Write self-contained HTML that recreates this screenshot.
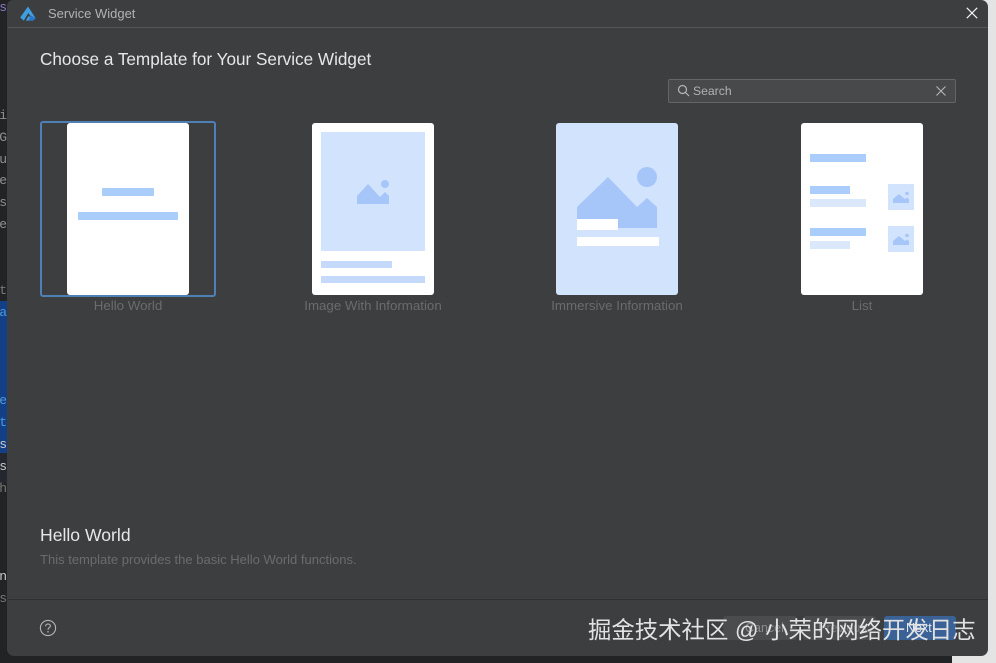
<!DOCTYPE html>
<html>
<head>
<meta charset="utf-8">
<style>
html,body{margin:0;padding:0}
body{width:996px;height:663px;position:relative;overflow:hidden;background:#222324;font-family:"Liberation Sans","Noto Sans CJK SC",sans-serif}
.a{position:absolute}
.t{position:absolute;white-space:nowrap}
.code{position:absolute;font-family:"Liberation Mono",monospace;font-size:13px;line-height:16px;white-space:nowrap;text-align:right;width:7px;left:0;overflow:hidden;direction:rtl}
.lbl{position:absolute;top:298px;font-size:13.3px;line-height:16px;color:#696c6d;white-space:nowrap;text-align:center;transform:translateX(-50%)}
.card{position:absolute;top:123px;width:122px;height:172px;background:#fff;border-radius:3px}
.b{position:absolute}
</style>
</head>
<body>
<div class="a" style="left:952px;top:0;width:44px;height:663px;background:#e4e4e4"></div>
<div class="a" style="left:0;top:301px;width:7px;height:152px;background:#123f86"></div>
<div class="a" style="left:0;top:453px;width:7px;height:30px;background:#24282e"></div>
<div class="code" style="top:0;color:#8b76c4">s</div>
<div class="code" style="top:108px;color:#8d9092">i</div>
<div class="code" style="top:130px;color:#8d9092">G</div>
<div class="code" style="top:152px;color:#8d9092">u</div>
<div class="code" style="top:173px;color:#8d9092">e</div>
<div class="code" style="top:195px;color:#8d9092">s</div>
<div class="code" style="top:217px;color:#8d9092">e</div>
<div class="code" style="top:283px;color:#77797b">t</div>
<div class="code" style="top:305px;color:#4f98d8">a</div>
<div class="code" style="top:393px;color:#4f98d8">e</div>
<div class="code" style="top:415px;color:#4f98d8">t</div>
<div class="code" style="top:437px;color:#c8cacc">s</div>
<div class="code" style="top:459px;color:#c8cacc">s</div>
<div class="code" style="top:481px;color:#777">h</div>
<div class="code" style="top:569px;color:#c8cacc">n</div>
<div class="code" style="top:591px;color:#777">s</div>

<div class="a" style="left:7px;top:0;width:981px;height:656px;background:#3d3e40;border-radius:6px 7px 7px 7px"></div>
<div class="a" style="left:8px;top:27px;width:980px;height:1px;background:#545556"></div>
<div class="a" style="left:8px;top:599px;width:980px;height:1px;background:#2f3032"></div>

<svg class="a" style="left:19px;top:5px" width="18" height="17" viewBox="0 0 18 17">
<path d="M9 1.5L1.2 12.5L4.8 15.6L9.2 8L12 11.5H9.2L7 15.6H14L16.5 13Z" fill="#3f9fe0"/>
<path d="M12 10.5L16.8 13.2L14 15.6H9.5L10.5 13Z" fill="#2a76cc"/>
</svg>
<div class="t" style="left:48px;top:6px;font-size:13px;line-height:16px;color:#b0b2b3">Service Widget</div>
<svg class="a" style="left:966px;top:7px" width="12" height="12" viewBox="0 0 12 12"><path d="M.8.8L11.2 11.2M11.2.8L.8 11.2" stroke="#f2f2f2" stroke-width="1.2" fill="none"/></svg>

<div class="t" style="left:40px;top:48px;font-size:17.15px;line-height:22px;color:#e6e7e8">Choose a Template for Your Service Widget</div>

<div class="a" style="left:668px;top:79px;width:286px;height:22px;background:#47494a;border:1px solid #636566;border-radius:2px"></div>
<svg class="a" style="left:677px;top:84px" width="13" height="13" viewBox="0 0 13 13"><circle cx="5.5" cy="5.5" r="4" stroke="#b4b6b7" stroke-width="1.2" fill="none"/><path d="M8.5 8.5L12 12" stroke="#b4b6b7" stroke-width="1.2"/></svg>
<div class="t" style="left:693px;top:83px;font-size:12.2px;line-height:16px;color:#b0b2b3">Search</div>
<svg class="a" style="left:936px;top:86px" width="10" height="10" viewBox="0 0 10 10"><path d="M.5.5L9.5 9.5M9.5.5L.5 9.5" stroke="#b4b6b7" stroke-width="1.1" fill="none"/></svg>

<!-- Hello World -->
<div class="a" style="left:40px;top:121px;width:172px;height:172px;border:2px solid #4f80b5;border-radius:3px"></div>
<div class="card" style="left:67px">
<div class="b" style="left:35px;top:65px;width:52px;height:8px;background:#abcdfb"></div>
<div class="b" style="left:11px;top:89px;width:100px;height:8px;background:#abcdfb"></div>
</div>
<div class="lbl" style="left:128px">Hello World</div>

<!-- Image with information -->
<div class="card" style="left:312px">
<div class="b" style="left:9px;top:9px;width:104px;height:119px;background:#d2e3fd"></div>
<svg class="b" style="left:45px;top:56px" width="32" height="26" viewBox="0 0 32 26">
<circle cx="28" cy="5" r="4" fill="#a6c6fa"/>
<path d="M0 17L11 5L23 18L28 13L32 17V25H0Z" fill="#a6c6fa"/>
</svg>
<div class="b" style="left:9px;top:138px;width:71px;height:7px;background:#c5dafb"></div>
<div class="b" style="left:9px;top:153px;width:104px;height:7px;background:#c5dafb"></div>
</div>
<div class="lbl" style="left:373px">Image With Information</div>

<!-- Immersive -->
<div class="card" style="left:556px;background:#d2e3fd">
<svg class="b" style="left:21px;top:43px" width="81" height="63" viewBox="0 0 81 63">
<circle cx="70" cy="11" r="10" fill="#a6c6fa"/>
<path d="M0 41L31 11L60 41L70 32L80 41V62H0Z" fill="#a6c6fa"/>
</svg>
<div class="b" style="left:21px;top:96px;width:41px;height:11px;background:#fff"></div>
<div class="b" style="left:21px;top:114px;width:82px;height:9px;background:#fff"></div>
</div>
<div class="lbl" style="left:617px">Immersive Information</div>

<!-- List -->
<div class="card" style="left:801px">
<div class="b" style="left:9px;top:31px;width:56px;height:8px;background:#abcdfb"></div>
<div class="b" style="left:9px;top:63px;width:40px;height:8px;background:#abcdfb"></div>
<div class="b" style="left:9px;top:76px;width:56px;height:8px;background:#dbe7fb"></div>
<div class="b" style="left:9px;top:105px;width:56px;height:8px;background:#abcdfb"></div>
<div class="b" style="left:9px;top:118px;width:40px;height:8px;background:#dbe7fb"></div>
<div class="b" style="left:87px;top:61px;width:26px;height:26px;background:#d2e3fd"></div>
<div class="b" style="left:87px;top:103px;width:26px;height:26px;background:#d2e3fd"></div>
<svg class="b" style="left:92px;top:68px" width="17" height="14" viewBox="0 0 17 14"><circle cx="14" cy="2.5" r="1.8" fill="#a6c6fa"/><path d="M0 8L6 3L12 8L14 6.5L16 8V12H0Z" fill="#a6c6fa"/></svg>
<svg class="b" style="left:92px;top:110px" width="17" height="14" viewBox="0 0 17 14"><circle cx="14" cy="2.5" r="1.8" fill="#a6c6fa"/><path d="M0 8L6 3L12 8L14 6.5L16 8V12H0Z" fill="#a6c6fa"/></svg>
</div>
<div class="lbl" style="left:862px">List</div>

<div class="t" style="left:40px;top:525px;font-size:17.6px;line-height:20px;color:#e6e7e8">Hello World</div>
<div class="t" style="left:40px;top:552px;font-size:13.03px;line-height:16px;color:#696c6d">This template provides the basic Hello World functions.</div>

<svg class="a" style="left:39px;top:619px" width="18" height="18" viewBox="0 0 18 18"><circle cx="9" cy="9" r="7.6" stroke="#b4b6b7" stroke-width="1.1" fill="none"/><path d="M6.6 7.2C6.6 5.8 7.7 5 9 5C10.4 5 11.4 5.9 11.4 7C11.4 8.5 9 8.7 9 10.7" stroke="#b4b6b7" stroke-width="1.1" fill="none"/><circle cx="9" cy="12.8" r=".8" fill="#b4b6b7"/></svg>

<div class="a" style="left:723px;top:616px;width:74px;height:24px;background:#4a4c4d;border-radius:3px"></div>
<div class="a" style="left:803px;top:616px;width:73px;height:24px;background:#4a4c4d;border-radius:3px"></div>
<div class="a" style="left:884px;top:616px;width:72px;height:24px;background:#3a6296;border-radius:3px"></div>
<div class="t" style="left:745px;top:620px;font-size:12.5px;line-height:16px;color:#8a8c8d">Cancel</div>
<div class="t" style="left:818px;top:620px;font-size:12.5px;line-height:16px;color:#77797a">Previous</div>
<div class="t" style="left:906px;top:620px;font-size:12.5px;line-height:16px;color:#e8ecf2">Next</div>

<div class="t" style="left:588px;top:615px;font-size:23.4px;line-height:30px;color:#e2e2e2;font-family:'Liberation Sans','Noto Sans CJK SC',sans-serif">掘金技术社区 @ 小荣的网络开发日志</div>
</body>
</html>
